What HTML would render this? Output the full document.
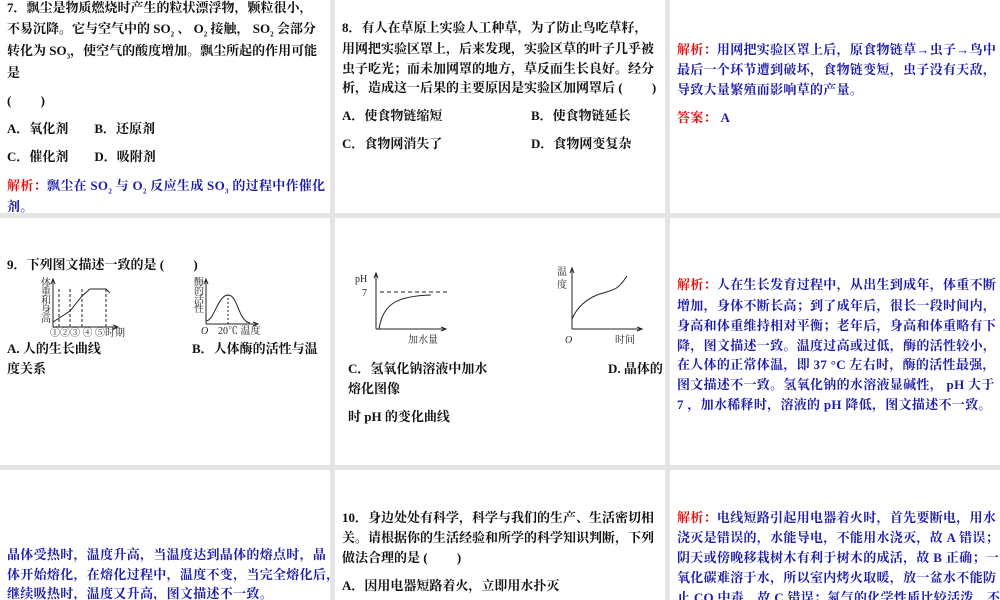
<!DOCTYPE html>
<html><head><meta charset="utf-8"><style>
*{margin:0;padding:0}
body{width:1000px;height:600px;background:#e4e4e4;position:relative;overflow:hidden;font-family:"Liberation Serif","Noto Serif CJK SC",serif;font-size:13px;color:#111}
.p{position:absolute;background:#fff;overflow:hidden}
.l{position:absolute;white-space:nowrap;line-height:18px;font-weight:bold}
.b{color:#1c1ca8;font-weight:bold;letter-spacing:0.3px}
.r{color:#e01010}
sub{font-size:7px}
svg{position:absolute}
svg text{font-family:"Liberation Serif","Noto Serif CJK SC",serif;font-size:10px;fill:#222}
</style></head><body>
<div class="p" style="left:0;top:0;width:330px;height:213px">
<div class="l" style="left:7px;top:-1px">7．飘尘是物质燃烧时产生的粒状漂浮物，颗粒很小，</div>
<div class="l" style="left:7px;top:20px">不易沉降。它与空气中的 SO<sub>2</sub> 、 O<sub>2</sub> 接触， SO<sub>2</sub> 会部分</div>
<div class="l" style="left:7px;top:42px">转化为 SO<sub>3</sub>，使空气的酸度增加。飘尘所起的作用可能</div>
<div class="l" style="left:7px;top:64px">是</div>
<div class="l" style="left:7px;top:92px">(　　 )</div>
<div class="l" style="left:7px;top:120px">A．氧化剂　　B．还原剂</div>
<div class="l" style="left:7px;top:148px">C．催化剂　　D．吸附剂</div>
<div class="l b" style="left:7px;top:177px"><span class="r">解析：</span>飘尘在 SO<sub>2</sub> 与 O<sub>2</sub> 反应生成 SO<sub>3</sub> 的过程中作催化</div>
<div class="l b" style="left:7px;top:198px">剂。</div>
</div>
<div class="p" style="left:335px;top:0;width:330px;height:213px">
<div class="l" style="left:7px;top:19px">8．有人在草原上实验人工种草，为了防止鸟吃草籽，</div>
<div class="l" style="left:7px;top:40px">用网把实验区罩上，后来发现，实验区草的叶子几乎被</div>
<div class="l" style="left:7px;top:60px">虫子吃光；而未加网罩的地方，草反而生长良好。经分</div>
<div class="l" style="left:7px;top:79px">析，造成这一后果的主要原因是实验区加网罩后 (　　 )</div>
<div class="l" style="left:7px;top:107px">A．使食物链缩短</div>
<div class="l" style="left:196px;top:107px">B．使食物链延长</div>
<div class="l" style="left:7px;top:135px">C．食物网消失了</div>
<div class="l" style="left:196px;top:135px">D．食物网变复杂</div>
</div>
<div class="p" style="left:670px;top:0;width:330px;height:213px">
<div class="l b" style="left:7px;top:41px"><span class="r">解析：</span>用网把实验区罩上后，原食物链草→虫子→鸟中</div>
<div class="l b" style="left:7px;top:61px">最后一个环节遭到破坏，食物链变短，虫子没有天敌，</div>
<div class="l b" style="left:7px;top:81px">导致大量繁殖而影响草的产量。</div>
<div class="l b" style="left:7px;top:109px"><span class="r">答案：</span> A</div>
</div>

<div class="p" style="left:0;top:218px;width:330px;height:247px">
<div class="l" style="left:7px;top:38px">9．下列图文描述一致的是 (　　 )</div>
<svg style="left:40px;top:59px" width="95" height="62">
<text x="1" y="9" font-size="9">体</text><text x="1" y="18" font-size="9">重</text><text x="1" y="27" font-size="9">和</text><text x="1" y="36" font-size="9">身</text><text x="1" y="45" font-size="9">高</text>
<path d="M13 50V3M11 7l2-5 2 5M13 50H77M73 48l5 2-5 2" stroke="#222" fill="none"/>
<path d="M13 45L30 34 L42 19 L50 12 H66 L70 16" stroke="#222" fill="none"/>
<path d="M19 50V12M30 50V12M42 50V12M66 50V12" stroke="#222" stroke-dasharray="3 2"/>
<text x="10" y="59" font-size="9">①②③ ④ ⑤时期</text>
</svg>
<svg style="left:192px;top:59px" width="75" height="62">
<text x="2" y="8" font-size="9">酶</text><text x="2" y="17" font-size="9">的</text><text x="2" y="26" font-size="9">活</text><text x="2" y="35" font-size="9">性</text>
<path d="M14 47V3M12 7l2-5 2 5M14 47H65M61 45l5 2-5 2" stroke="#222" fill="none"/>
<path d="M14 44 C22 44 26 18 36 18 C46 18 46 44 58 46" stroke="#222" fill="none"/>
<path d="M36 47V18" stroke="#222" stroke-dasharray="2 2"/>
<text x="9" y="57" font-size="9" font-style="italic">O</text><text x="26" y="57" font-size="9">20℃ 温度</text>
</svg>
<div class="l" style="left:7px;top:122px">A. 人的生长曲线</div>
<div class="l" style="left:192px;top:122px">B．人体酶的活性与温</div>
<div class="l" style="left:7px;top:142px">度关系</div>
</div>
<div class="p" style="left:335px;top:218px;width:330px;height:247px">
<svg style="left:18px;top:50px" width="100" height="80">
<text x="2" y="14" font-size="11">pH</text><text x="9" y="28" font-size="11">7</text>
<path d="M23 61V6M21 10l2-5 2 5M23 61H92M88 59l5 2-5 2" stroke="#222" fill="none"/>
<path d="M27 24H95" stroke="#222" stroke-dasharray="4 3"/>
<path d="M26 61C30 35 45 28 78 27" stroke="#222" fill="none"/>
<text x="55" y="75" font-size="11">加水量</text>
</svg>
<svg style="left:220px;top:45px" width="90" height="85">
<text x="2" y="12" font-size="11">温</text><text x="2" y="25" font-size="11">度</text>
<path d="M17 66V6M15 10l2-5 2 5M17 66H86M82 64l5 2-5 2" stroke="#222" fill="none"/>
<path d="M17 56C22 44 32 36 42 32 C60 26 62 28 72 13" stroke="#222" fill="none"/>
<text x="10" y="80" font-size="12" font-style="italic">O</text><text x="60" y="80" font-size="11">时间</text>
</svg>
<div class="l" style="left:13px;top:142px">C．氢氧化钠溶液中加水</div>
<div class="l" style="left:273px;top:142px">D. 晶体的</div>
<div class="l" style="left:13px;top:162px">熔化图像</div>
<div class="l" style="left:13px;top:190px">时 pH 的变化曲线</div>
</div>
<div class="p" style="left:670px;top:218px;width:330px;height:247px">
<div class="l b" style="left:7px;top:58px"><span class="r">解析：</span>人在生长发育过程中，从出生到成年，体重不断</div>
<div class="l b" style="left:7px;top:79px">增加，身体不断长高；到了成年后，很长一段时间内，</div>
<div class="l b" style="left:7px;top:99px">身高和体重维持相对平衡；老年后，身高和体重略有下</div>
<div class="l b" style="left:7px;top:119px">降，图文描述一致。温度过高或过低，酶的活性较小，</div>
<div class="l b" style="left:7px;top:138px">在人体的正常体温，即 37 °C 左右时，酶的活性最强，</div>
<div class="l b" style="left:7px;top:158px">图文描述不一致。氢氧化钠的水溶液显碱性， pH 大于</div>
<div class="l b" style="left:7px;top:178px">7 ，加水稀释时，溶液的 pH 降低，图文描述不一致。</div>
</div>

<div class="p" style="left:0;top:470px;width:330px;height:130px">
<div class="l b" style="left:7px;top:76px">晶体受热时，温度升高，当温度达到晶体的熔点时，晶</div>
<div class="l b" style="left:7px;top:96px">体开始熔化，在熔化过程中，温度不变，当完全熔化后，</div>
<div class="l b" style="left:7px;top:115px">继续吸热时，温度又升高，图文描述不一致。</div>
</div>
<div class="p" style="left:335px;top:470px;width:330px;height:130px">
<div class="l" style="left:7px;top:39px">10．身边处处有科学，科学与我们的生产、生活密切相</div>
<div class="l" style="left:7px;top:59px">关。请根据你的生活经验和所学的科学知识判断，下列</div>
<div class="l" style="left:7px;top:79px">做法合理的是 (　　 )</div>
<div class="l" style="left:7px;top:107px">A．因用电器短路着火，立即用水扑灭</div>
</div>
<div class="p" style="left:670px;top:470px;width:330px;height:130px">
<div class="l b" style="left:7px;top:39px"><span class="r">解析：</span>电线短路引起用电器着火时，首先要断电，用水</div>
<div class="l b" style="left:7px;top:59px">浇灭是错误的，水能导电，不能用水浇灭，故 A 错误；</div>
<div class="l b" style="left:7px;top:79px">阴天或傍晚移栽树木有利于树木的成活，故 B 正确；一</div>
<div class="l b" style="left:7px;top:99px">氧化碳难溶于水，所以室内烤火取暖，放一盆水不能防</div>
<div class="l b" style="left:7px;top:119px">止 CO 中毒，故 C 错误；氮气的化学性质比较活泼，不</div>
</div>
</body></html>
